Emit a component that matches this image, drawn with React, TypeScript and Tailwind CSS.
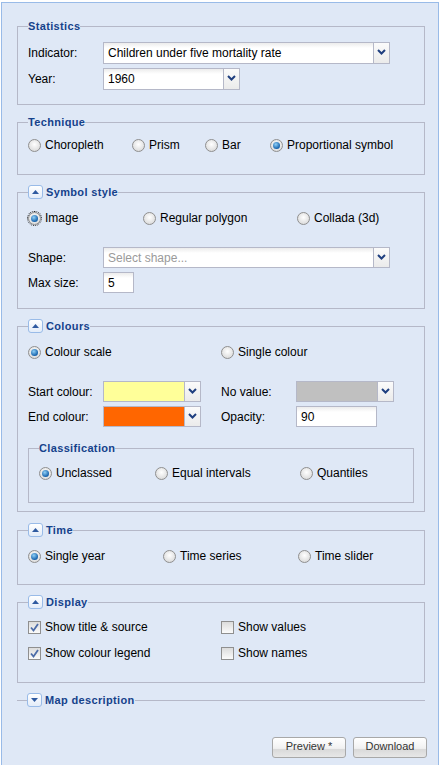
import React from "react";

function Chevron({ up = false }: { up?: boolean }) {
  return (
    <svg width="9" height="6" viewBox="0 0 9 6" className="block">
      <polyline
        points={up ? "1,5 4.5,1.5 8,5" : "1,1 4.5,4.5 8,1"}
        fill="none"
        stroke="#1f3f7f"
        strokeWidth="2"
      />
    </svg>
  );
}

function Toggle({ collapsed }: { collapsed?: boolean }) {
  return (
    <span className="flex h-[14px] w-[15px] items-center justify-center rounded-[3px] border border-[#99bbe8] bg-[linear-gradient(to_bottom,#ffffff,#e3ecf9)]">
      <svg width="7" height="4" viewBox="0 0 7 4" className="block">
        <polygon
          points={collapsed ? "0,0 7,0 3.5,4" : "0,4 7,4 3.5,0"}
          fill="#2f5aa0"
        />
      </svg>
    </span>
  );
}

function Fieldset({
  title,
  toggle,
  collapsed,
  className = "",
  children,
}: {
  title: string;
  toggle?: boolean;
  collapsed?: boolean;
  className?: string;
  children?: React.ReactNode;
}) {
  return (
    <fieldset
      className={`border-[#b5b8c8] px-[10px] ${
        collapsed ? "border-t border-x-0 border-b-0" : "border"
      } ${className}`}
    >
      <legend className="h-[14px] p-0">
        <span className="flex h-[14px] items-center gap-[3px] text-[11px] leading-[14px] font-bold tracking-[0.35px] text-[#15428b]">
          {toggle && <Toggle collapsed={collapsed} />}
          {title}
        </span>
      </legend>
      {children}
    </fieldset>
  );
}

function Radio({
  label,
  checked,
  focused,
  className = "",
}: {
  label: string;
  checked?: boolean;
  focused?: boolean;
  className?: string;
}) {
  return (
    <span className={`flex h-[18px] items-center gap-[4px] ${className}`}>
      <span
        className={`flex h-[13px] w-[13px] shrink-0 items-center justify-center rounded-full border border-[#8f8f8f] bg-[radial-gradient(circle_at_50%_40%,#ffffff,#d2d2d2)] ${
          focused ? "outline-1 outline-dotted outline-[#222]" : ""
        }`}
      >
        {checked && (
          <span className="h-[7px] w-[7px] rounded-full bg-[radial-gradient(circle_at_40%_35%,#8fd0f7,#0d5aa6_75%)]" />
        )}
      </span>
      <span>{label}</span>
    </span>
  );
}

function Check({
  label,
  checked,
  className = "",
}: {
  label: string;
  checked?: boolean;
  className?: string;
}) {
  return (
    <span className={`flex h-[18px] items-center gap-[4px] ${className}`}>
      <span className="flex h-[13px] w-[13px] shrink-0 items-center justify-center border border-[#8f8f8f] bg-[linear-gradient(to_bottom,#dcdcdc,#fbfbfb)]">
        {checked && (
          <svg width="11" height="11" viewBox="0 0 11 11" className="block">
            <polyline
              points="2,5.5 4.5,8.5 9,2"
              fill="none"
              stroke="#4c6ca8"
              strokeWidth="1.8"
            />
          </svg>
        )}
      </span>
      <span>{label}</span>
    </span>
  );
}

function Combo({
  value,
  placeholder,
  className = "",
  swatch,
  h = "h-[21px]",
}: {
  value?: string;
  placeholder?: string;
  className?: string;
  swatch?: string;
  h?: string;
}) {
  return (
    <div className={`flex ${h} border border-[#b5b8c8] ${className}`}>
      <div
        className={`flex flex-1 items-center pl-[4px] ${
          swatch ??
          "bg-[linear-gradient(to_bottom,#ececec,#ffffff_5px)]"
        }`}
      >
        {value && <span>{value}</span>}
        {placeholder && <span className="text-[#9a9a9a]">{placeholder}</span>}
      </div>
      <div className="flex w-[16px] items-center justify-center border-l border-[#b5b8c8] bg-[linear-gradient(to_bottom,#fbfbfb,#ebebeb)] pb-[2px]">
        <Chevron />
      </div>
    </div>
  );
}

function TextBox({ value, className = "" }: { value: string; className?: string }) {
  return (
    <div
      className={`flex h-[21px] items-center border border-[#b5b8c8] bg-[linear-gradient(to_bottom,#ececec,#ffffff_5px)] pl-[4px] ${className}`}
    >
      {value}
    </div>
  );
}

function Row({ label, children }: { label: string; children: React.ReactNode }) {
  return (
    <div className="flex items-center">
      <span className="w-[75px] shrink-0">{label}</span>
      {children}
    </div>
  );
}

export default function App() {
  return (
    <div className="min-h-[765px] bg-white pt-[2px] pl-[1px] font-['Liberation_Sans',Arial,sans-serif] text-[12px] text-black">
      <div className="h-[763px] w-[438px] border border-b-0 border-[#99bbe8] bg-[#dfe8f6] pt-[16px] pr-[13px] pl-[15px]">
        <Fieldset title="Statistics" className="pt-[9px] pb-[14px]">
          <div className="flex flex-col gap-[4px]">
            <Row label="Indicator:">
              <Combo
                h="h-[22px]"
                className="w-[287px]"
                value="Children under five mortality rate"
              />
            </Row>
            <Row label="Year:">
              <Combo h="h-[22px]" className="w-[137px]" value="1960" />
            </Row>
          </div>
        </Fieldset>

        <Fieldset title="Technique" className="mt-[10px] pt-[7px] pb-[20px]">
          <div className="flex">
            <Radio label="Choropleth" className="w-[104px]" />
            <Radio label="Prism" className="w-[73px]" />
            <Radio label="Bar" className="w-[65px]" />
            <Radio label="Proportional symbol" checked />
          </div>
        </Fieldset>

        <Fieldset
          title="Symbol style"
          toggle
          className="mt-[10px] pt-[10px] pb-[15px]"
        >
          <div className="flex">
            <Radio label="Image" checked focused className="w-[115px]" />
            <Radio label="Regular polygon" className="w-[154px]" />
            <Radio label="Collada (3d)" />
          </div>
          <div className="mt-[20px] flex flex-col gap-[4px]">
            <Row label="Shape:">
              <Combo className="w-[287px]" placeholder="Select shape..." />
            </Row>
            <Row label="Max size:">
              <TextBox value="5" className="w-[31px]" />
            </Row>
          </div>
        </Fieldset>

        <Fieldset
          title="Colours"
          toggle
          className="mt-[10px] pt-[10px] pb-[8px]"
        >
          <div className="flex">
            <Radio label="Colour scale" checked className="w-[193px]" />
            <Radio label="Single colour" />
          </div>
          <div className="mt-[20px] grid grid-cols-[193px_1fr] gap-y-[4px]">
            <Row label="Start colour:">
              <Combo className="w-[98px]" swatch="bg-[#ffff99]" />
            </Row>
            <Row label="No value:">
              <Combo className="w-[98px]" swatch="bg-[#c0c0c0]" />
            </Row>
            <Row label="End colour:">
              <Combo className="w-[98px]" swatch="bg-[#ff6600]" />
            </Row>
            <Row label="Opacity:">
              <TextBox value="90" className="w-[81px]" />
            </Row>
          </div>
          <Fieldset title="Classification" className="mt-[14px] pt-[9px] pb-[20px]">
            <div className="flex">
              <Radio label="Unclassed" checked className="w-[116px]" />
              <Radio label="Equal intervals" className="w-[145px]" />
              <Radio label="Quantiles" />
            </div>
          </Fieldset>
        </Fieldset>

        <Fieldset title="Time" toggle className="mt-[11px] pt-[10px] pb-[19px]">
          <div className="flex">
            <Radio label="Single year" checked className="w-[135px]" />
            <Radio label="Time series" className="w-[135px]" />
            <Radio label="Time slider" />
          </div>
        </Fieldset>

        <Fieldset title="Display" toggle className="mt-[10px] pt-[9px] pb-[20px]">
          <div className="grid grid-cols-[193px_1fr] gap-y-[8px]">
            <Check label="Show title & source" checked />
            <Check label="Show values" />
            <Check label="Show colour legend" checked />
            <Check label="Show names" />
          </div>
        </Fieldset>

        <Fieldset title="Map description" toggle collapsed className="mt-[10px]" />

        <div className="mt-[30px] -mr-[2px] flex justify-end gap-[7px]">
          <button className="h-[21px] w-[74px] rounded-[3px] border border-[#a8a8a8] bg-[linear-gradient(to_bottom,#ffffff_0%,#f1f1f1_55%,#d9d9d9_58%,#e7e7e7_100%)] pb-[2px] text-[11px] text-[#333]">
            Preview *
          </button>
          <button className="h-[21px] w-[74px] rounded-[3px] border border-[#a8a8a8] bg-[linear-gradient(to_bottom,#ffffff_0%,#f1f1f1_55%,#d9d9d9_58%,#e7e7e7_100%)] pb-[2px] text-[11px] text-[#333]">
            Download
          </button>
        </div>
      </div>
    </div>
  );
}
